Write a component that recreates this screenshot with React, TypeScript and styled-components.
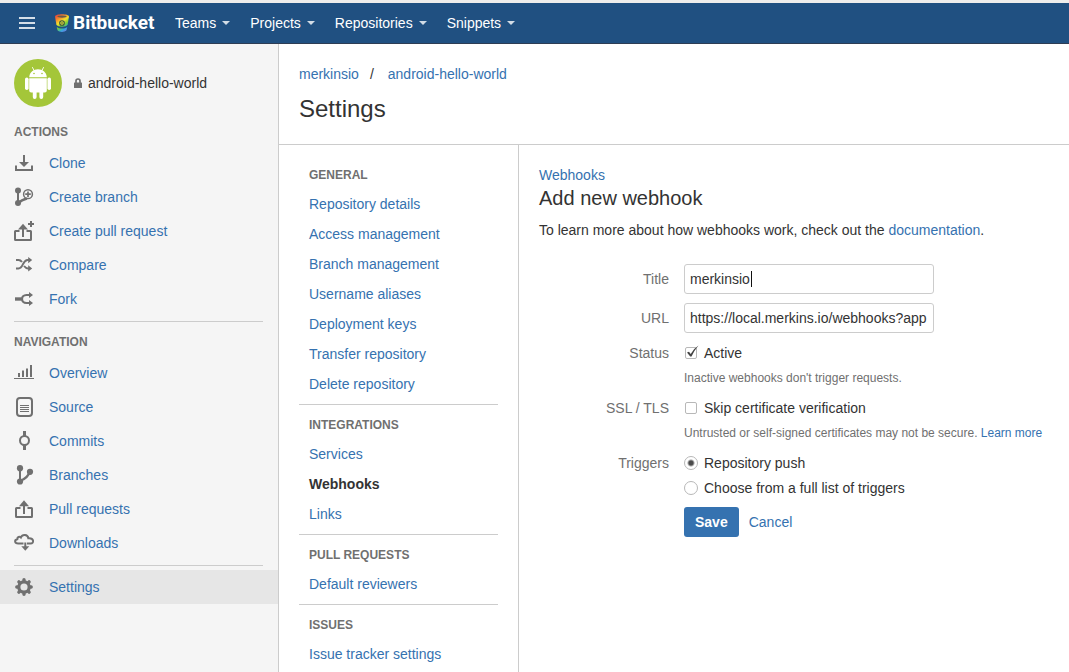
import React, { useState } from "react";
import styled, { createGlobalStyle } from "styled-components";

const GlobalStyle = createGlobalStyle`
  *, *::before, *::after { box-sizing: border-box; }
  html, body { margin: 0; padding: 0; }
  body {
    background: #fff;
    color: #333;
    font: 14px/20px "Liberation Sans", Arial, sans-serif;
  }
  h1, h2, h3, p, ul, ol { margin: 0; padding: 0; font-weight: normal; }
  ul, ol { list-style: none; }
  button, input { font: inherit; color: inherit; }
  a { color: #3572b0; text-decoration: none; }
  a:hover { text-decoration: underline; }
  svg { display: block; flex: none; }
`;

const Page = styled.div`
  display: flex;
  flex-direction: column;
  min-height: 100vh;
`;

const TopBar = styled.header`
  display: flex;
  align-items: center;
  height: 44px;
  padding: 0 18px;
  background: #205081;
  border-top: 3px solid #eeedec;
  border-bottom: 1px solid #2e3d54;
`;

const MenuButton = styled.button`
  display: flex;
  padding: 0;
  border: 0;
  background: none;
  cursor: pointer;
`;

const Logo = styled.a`
  display: flex;
  align-items: center;
  gap: 4px;
  flex: 0 0 101px;
  margin: 0 9px 0 19px;
  color: #fff;
  font: bold 19px/24px Roboto, "Liberation Sans", sans-serif;
`;

const MainMenu = styled.nav`
  display: flex;
`;

const MenuItem = styled.button`
  display: flex;
  align-items: center;
  gap: 6px;
  padding: 0 10px;
  border: 0;
  background: none;
  color: #fff;
  cursor: pointer;

  &::after {
    content: "";
    border: 4px solid transparent;
    border-top-color: #d2dce6;
    border-bottom: 0;
  }
`;

const Body = styled.div`
  display: flex;
  flex: 1;
`;

const Sidebar = styled.aside`
  flex: 0 0 279px;
  padding-top: 15px;
  background: #f5f5f5;
  border-right: 1px solid #ccc;
`;

const Repository = styled.div`
  display: flex;
  align-items: center;
  padding: 0 14px;
  margin-bottom: 15px;

  span { margin-left: 6px; }
`;

const LockWrap = styled.i`
  margin-left: 12px;
`;

const GroupTitle = styled.h3`
  margin-bottom: 4px;
  color: #707070;
  font-size: 12px;
  font-weight: bold;
  line-height: 20px;
  text-transform: uppercase;
`;

const SideTitle = styled(GroupTitle)`
  padding: 0 14px;
`;

const SideDivider = styled.hr<{ $after: number }>`
  height: 1px;
  margin: 5px 15px ${(p) => p.$after}px 14px;
  border: 0;
  background: #ccc;
`;

const SideLink = styled.a<{ $active?: boolean }>`
  display: flex;
  align-items: center;
  gap: 15px;
  height: 34px;
  padding: 0 14px;
  background: ${(p) => (p.$active ? "#e6e6e6" : "transparent")};
`;

const Main = styled.main`
  display: flex;
  flex: 1;
  flex-direction: column;
  min-width: 0;
`;

const PageHeader = styled.header`
  padding: 20px 20px 20px;
  border-bottom: 1px solid #ccc;
`;

const Breadcrumbs = styled.ol`
  display: flex;
  margin-bottom: 10px;

  li + li::before {
    content: "/";
    margin: 0 14px 0 11px;
  }
`;

const PageTitle = styled.h1`
  font-size: 24px;
  line-height: 30px;
`;

const Columns = styled.div`
  display: flex;
  flex: 1;
`;

const SettingsNav = styled.nav`
  flex: 0 0 240px;
  padding: 20px 20px 0;
  border-right: 1px solid #ccc;
`;

const NavGroup = styled.section`
  padding: 0 10px;

  & + & {
    margin-top: 5px;
    padding-top: 10px;
    border-top: 1px solid #ccc;
  }
`;

const NavLink = styled.a<{ $active?: boolean }>`
  display: block;
  line-height: 30px;
  color: ${(p) => (p.$active ? "#333" : "#3572b0")};
  font-weight: ${(p) => (p.$active ? "bold" : "normal")};
`;

const Content = styled.section`
  flex: 1;
  min-width: 0;
  padding: 20px;
`;

const ContentTitle = styled.h2`
  font-size: 20px;
  line-height: 26px;
  margin-bottom: 9px;
`;

const Form = styled.form`
  margin-top: 24px;
`;

const Field = styled.div<{ $gap?: number }>`
  display: grid;
  grid-template-columns: 130px minmax(0, 1fr);
  column-gap: 15px;
  margin-top: ${(p) => p.$gap ?? 0}px;
`;

const FieldLabel = styled.label<{ $tall?: boolean }>`
  color: #707070;
  text-align: right;
  line-height: ${(p) => (p.$tall ? 30 : 20)}px;
`;

const InputWrap = styled.div`
  position: relative;
  max-width: 250px;
`;

const TextInput = styled.input`
  display: block;
  width: 100%;
  height: 30px;
  padding: 0 5px;
  border: 1px solid #ccc;
  border-radius: 3px;
  background: #fff;
  color: #333;
  outline: 0;
  caret-color: transparent;
`;

const TextCursor = styled.span`
  position: absolute;
  top: 7px;
  left: 67px;
  width: 1px;
  height: 16px;
  background: #111;
`;

const Choice = styled.label`
  display: flex;
  align-items: center;
  width: fit-content;

  & + & { margin-top: 5px; }
`;

const CheckSlot = styled.span`
  position: relative;
  display: flex;
  margin: 0 7px 0 1px;

  svg {
    position: absolute;
    left: 1px;
    top: -2px;
    pointer-events: none;
  }
`;

const CheckBox = styled.input`
  appearance: none;
  width: 12px;
  height: 12px;
  margin: 0;
  border: 1px solid #b8b8b8;
  border-radius: 2px;
  background: #fff;
`;

const Radio = styled.input`
  appearance: none;
  width: 14px;
  height: 14px;
  margin: 0 6px 0 0;
  border: 1px solid #b8b8b8;
  border-radius: 50%;
  background: #fff;

  &:checked {
    background: radial-gradient(circle, #4a4a4a 0 2px, #fff 4px);
  }
`;

const Hint = styled.p`
  margin-top: 5px;
  color: #707070;
  font-size: 12px;
  line-height: 20px;
`;

const Actions = styled.div`
  display: flex;
  align-items: center;
  gap: 10px;
  grid-column: 2;
`;

const SaveButton = styled.button`
  height: 30px;
  padding: 0 11px;
  border: 0;
  border-radius: 3px;
  background: #3572b0;
  color: #fff;
  font-weight: bold;
  cursor: pointer;
`;

const Icon = ({ children }: { children: React.ReactNode }) => (
  <svg width="20" height="20" viewBox="0 0 20 20" fill="none" stroke="#707070" strokeWidth="2" aria-hidden="true">
    {children}
  </svg>
);

const solid = { fill: "#707070", stroke: "none" };

const icons = {
  clone: (
    <Icon>
      <path d="M2 12.5V17H18V12.5M10 2V10" />
      <path {...solid} d="M5 9H15L10 14Z" />
    </Icon>
  ),
  createBranch: (
    <Icon>
      <path d="M4 4V16" />
      <path strokeWidth="2.6" d="M4 16L8 13.4Q11 12 13 11.5" />
      <circle {...solid} cx="4" cy="3.5" r="3" />
      <circle {...solid} cx="4" cy="16" r="3" />
      <circle cx="14" cy="7.2" r="4.4" strokeWidth="1.5" />
      <path strokeWidth="1.7" d="M14 4.4V10M11.2 7.2H16.8" />
    </Icon>
  ),
  createPull: (
    <Icon>
      <path d="M5.5 10H1.5Q1 10 1 10.5V18.5Q1 19 1.5 19H16.5Q17 19 17 18.5V10.5Q17 10 16.5 10H12.5M9 16V7" />
      <path {...solid} d="M4 8.5L9 2.8L14 8.5Z" />
      <path d="M17 0V6M14 3H20" />
    </Icon>
  ),
  compare: (
    <Icon>
      <path d="M2 5H4.5Q6.5 5 8 7M10 11Q12 13.5 14 13.5H15.5M2 13.5H4.5Q7 13.5 9 9.2Q11 5 13.5 5H15.5" />
      <path {...solid} d="M14.2 2L18.2 5L14.2 8.2ZM14.2 10.3L18.2 13.5L14.2 16.6Z" />
    </Icon>
  ),
  fork: (
    <Icon>
      <path strokeWidth="3.4" d="M1 10H7.5" />
      <path strokeWidth="2.2" d="M17 6H12.5C6.5 6 6.5 14 12.5 14H17" />
      <path {...solid} d="M15 3L19 6L15 9ZM15 11L19 14L15 17Z" />
    </Icon>
  ),
  overview: (
    <Icon>
      <path d="M5 10V14M9 7.5V14M13 5.5V14M17 2V14" />
      <path strokeWidth="1" d="M0 15.5H20" />
    </Icon>
  ),
  source: (
    <Icon>
      <rect x="3" y="1" width="15" height="18" rx="3" />
      <path strokeWidth="1" d="M6 8.5H15M6 10.5H15M6 12.5H15M6 14.5H15" />
    </Icon>
  ),
  commits: (
    <Icon>
      <circle cx="10.5" cy="9.5" r="4.5" />
      <path strokeWidth="3" d="M10.5 0V5M10.5 14V19" />
    </Icon>
  ),
  branches: (
    <Icon>
      <path d="M6 3V16" />
      <path strokeWidth="2.4" d="M6 16Q14 13 15.5 7" />
      <circle {...solid} cx="6" cy="3.2" r="3.1" />
      <circle {...solid} cx="6" cy="16.5" r="3.1" />
      <circle {...solid} cx="16" cy="6.8" r="3.1" />
    </Icon>
  ),
  pulls: (
    <Icon>
      <path d="M6.5 9H2.5Q2 9 2 9.5V17.5Q2 18 2.5 18H17.5Q18 18 18 17.5V9.5Q18 9 17.5 9H13.5M10 15V6" />
      <path {...solid} d="M5 7.2L10 1.2L15 7.2Z" />
    </Icon>
  ),
  downloads: (
    <Icon>
      <path d="M9.5 10.5H4.2C.4 10.5 .2 6.8 3.3 6.2C3.2 4 5.6 3.2 6.9 4.5C8.3 1 13.8 1.2 14.3 5.2C20 4.6 20.5 10.500 16.5 10.5H13M11.3 9.5V14" />
      <path {...solid} d="M7.3 13.2H15.3L11.3 17.8Z" />
    </Icon>
  ),
  settings: (
    <Icon>
      <circle cx="10" cy="10" r="5.2" strokeWidth="3.2" />
      <path
        strokeWidth="3.4"
        strokeLinecap="round"
        d="M10 2.8V4M10 16V17.2M2.8 10H4M16 10H17.2M4.9 4.9L5.7 5.7M14.3 14.3L15.1 15.1M4.9 15.1L5.7 14.3M14.3 5.7L15.1 4.9"
      />
    </Icon>
  ),
};

const Hamburger = () => (
  <svg width="18" height="14" viewBox="0 0 18 14" stroke="#d5dee8" strokeWidth="2" aria-hidden="true">
    <path d="M1 2H17M1 7H17M1 12H17" />
  </svg>
);

const BucketMark = () => (
  <svg width="14" height="18" viewBox="0 0 14 18" aria-hidden="true">
    <defs>
      <linearGradient id="rainbow" gradientUnits="userSpaceOnUse" x1="1" y1="1" x2="12" y2="18">
        <stop offset="0" stopColor="#e8413c" />
        <stop offset="0.22" stopColor="#f58a2c" />
        <stop offset="0.42" stopColor="#f5e02c" />
        <stop offset="0.62" stopColor="#6fcf3c" />
        <stop offset="0.8" stopColor="#35a6e0" />
        <stop offset="1" stopColor="#8a6ce0" />
      </linearGradient>
    </defs>
    <path
      fill="url(#rainbow)"
      d="M0 2.500C0 -.6 14 -.6 14 2.500L12.600 10.800C11.500 13.400 2.500 13.400 1.400 10.800Z"
    />
    <path fill="url(#rainbow)" d="M1.8 13C4.5 15 9.5 15 12.2 13L11.5 16.3C9.5 18.5 4.5 18.5 2.5 16.3Z" />
    <ellipse cx="7" cy="2.6" rx="4.6" ry="1.1" fill="#6a5a4a" />
    <circle cx="7" cy="9" r="2.3" fill="#f3e43a" stroke="#31523f" strokeWidth="1.1" />
    <circle cx="7" cy="9" r=".8" fill="#31523f" />
  </svg>
);

const Avatar = () => (
  <svg width="48" height="48" viewBox="0 0 48 48" role="img" aria-label="Android">
    <circle cx="24" cy="24" r="24" fill="#a4c639" />
    <g fill="#fff">
      <path d="M15.2 18.3C15.7 7.500 32.3 7.500 32.8 18.3Z" />
      <path d="M15.2 19.2H32.8V31.5Q32.8 33.5 30.8 33.5H29.2V38A1.900 1.900 0 0 1 25.400 38V33.5H22.6V38A1.900 1.900 0 0 1 18.8 38V33.5H17.2Q15.2 33.5 15.2 31.5Z" />
      <rect x="11" y="18.5" width="3.6" height="12.5" rx="1.8" />
      <rect x="33.4" y="18.5" width="3.6" height="12.500" rx="1.8" />
    </g>
    <path d="M18.5 8.5L20.3 12M29.5 8.5L27.7 12" stroke="#fff" strokeWidth=".9" strokeLinecap="round" />
    <circle cx="20" cy="14.5" r=".8" fill="#a4c639" />
    <circle cx="28" cy="14.5" r=".8" fill="#a4c639" />
  </svg>
);

const Lock = () => (
  <svg width="8" height="11" viewBox="0 0 8 11" aria-hidden="true">
    <rect x="0" y="4.500" width="8" height="5.500" rx=".5" fill="#707070" />
    <path d="M2 5V3Q2 1 4 1T6 3V5" fill="none" stroke="#707070" strokeWidth="1.700" />
  </svg>
);

const CheckMark = () => (
  <svg width="13" height="13" viewBox="0 0 13 13" aria-hidden="true">
    <path d="M1 7.500L3 6.800L4.700 9Q7.500 3.500 12.500 .5Q8.200 5.500 5.500 11.500H4.200Z" fill="#444" />
  </svg>
);

type SideItem = [string, keyof typeof icons];

const actions: SideItem[] = [
  ["Clone", "clone"],
  ["Create branch", "createBranch"],
  ["Create pull request", "createPull"],
  ["Compare", "compare"],
  ["Fork", "fork"],
];

const navigation: SideItem[] = [
  ["Overview", "overview"],
  ["Source", "source"],
  ["Commits", "commits"],
  ["Branches", "branches"],
  ["Pull requests", "pulls"],
  ["Downloads", "downloads"],
];

const settingsGroups = [
  {
    title: "General",
    links: [
      "Repository details",
      "Access management",
      "Branch management",
      "Username aliases",
      "Deployment keys",
      "Transfer repository",
      "Delete repository",
    ],
  },
  { title: "Integrations", links: ["Services", "Webhooks", "Links"] },
  { title: "Pull requests", links: ["Default reviewers"] },
  { title: "Issues", links: ["Issue tracker settings"] },
];

const SideList = ({ items }: { items: SideItem[] }) => (
  <ul>
    {items.map(([label, icon]) => (
      <li key={label}>
        <SideLink href="#">
          {icons[icon]}
          {label}
        </SideLink>
      </li>
    ))}
  </ul>
);

export default function App() {
  const [title, setTitle] = useState("merkinsio");
  const [url, setUrl] = useState("https://local.merkins.io/webhooks?app");
  const [active, setActive] = useState(true);
  const [skip, setSkip] = useState(false);

  return (
    <Page>
      <GlobalStyle />
      <TopBar>
        <MenuButton type="button" aria-label="Menu">
          <Hamburger />
        </MenuButton>
        <Logo href="#">
          <BucketMark />
          Bitbucket
        </Logo>
        <MainMenu>
          {["Teams", "Projects", "Repositories", "Snippets"].map((name) => (
            <MenuItem key={name} type="button">
              {name}
            </MenuItem>
          ))}
        </MainMenu>
      </TopBar>
      <Body>
        <Sidebar>
          <Repository>
            <Avatar />
            <LockWrap>
              <Lock />
            </LockWrap>
            <span>android-hello-world</span>
          </Repository>
          <SideTitle>Actions</SideTitle>
          <SideList items={actions} />
          <SideDivider $after={10} />
          <SideTitle>Navigation</SideTitle>
          <SideList items={navigation} />
          <SideDivider $after={4} />
          <SideLink href="#" $active>
            {icons.settings}
            Settings
          </SideLink>
        </Sidebar>
        <Main>
          <PageHeader>
            <Breadcrumbs>
              <li>
                <a href="#">merkinsio</a>
              </li>
              <li>
                <a href="#">android-hello-world</a>
              </li>
            </Breadcrumbs>
            <PageTitle>Settings</PageTitle>
          </PageHeader>
          <Columns>
            <SettingsNav>
              {settingsGroups.map((group) => (
                <NavGroup key={group.title}>
                  <GroupTitle>{group.title}</GroupTitle>
                  {group.links.map((link) => (
                    <NavLink key={link} href="#" $active={link === "Webhooks"}>
                      {link}
                    </NavLink>
                  ))}
                </NavGroup>
              ))}
            </SettingsNav>
            <Content>
              <a href="#">Webhooks</a>
              <ContentTitle>Add new webhook</ContentTitle>
              <p>
                To learn more about how webhooks work, check out the <a href="#">documentation</a>.
              </p>
              <Form onSubmit={(e) => e.preventDefault()}>
                <Field>
                  <FieldLabel $tall htmlFor="title">
                    Title
                  </FieldLabel>
                  <InputWrap>
                    <TextInput id="title" type="text" value={title} onChange={(e) => setTitle(e.target.value)} />
                    <TextCursor />
                  </InputWrap>
                </Field>
                <Field $gap={9}>
                  <FieldLabel $tall htmlFor="url">
                    URL
                  </FieldLabel>
                  <InputWrap>
                    <TextInput id="url" type="text" value={url} onChange={(e) => setUrl(e.target.value)} />
                  </InputWrap>
                </Field>
                <Field $gap={10}>
                  <FieldLabel htmlFor="active">Status</FieldLabel>
                  <div>
                    <Choice>
                      <CheckSlot>
                        <CheckBox
                          id="active"
                          type="checkbox"
                          checked={active}
                          onChange={(e) => setActive(e.target.checked)}
                        />
                        {active && <CheckMark />}
                      </CheckSlot>
                      Active
                    </Choice>
                    <Hint>Inactive webhooks don't trigger requests.</Hint>
                  </div>
                </Field>
                <Field $gap={10}>
                  <FieldLabel htmlFor="skip">SSL / TLS</FieldLabel>
                  <div>
                    <Choice>
                      <CheckSlot>
                        <CheckBox
                          id="skip"
                          type="checkbox"
                          checked={skip}
                          onChange={(e) => setSkip(e.target.checked)}
                        />
                        {skip && <CheckMark />}
                      </CheckSlot>
                      Skip certificate verification
                    </Choice>
                    <Hint>
                      Untrusted or self-signed certificates may not be secure. <a href="#">Learn more</a>
                    </Hint>
                  </div>
                </Field>
                <Field $gap={10}>
                  <FieldLabel as="span" id="triggers">
                    Triggers
                  </FieldLabel>
                  <div role="radiogroup" aria-labelledby="triggers">
                    <Choice>
                      <Radio type="radio" name="trigger" defaultChecked />
                      Repository push
                    </Choice>
                    <Choice>
                      <Radio type="radio" name="trigger" />
                      Choose from a full list of triggers
                    </Choice>
                  </div>
                </Field>
                <Field $gap={9}>
                  <Actions>
                    <SaveButton type="submit">Save</SaveButton>
                    <a href="#">Cancel</a>
                  </Actions>
                </Field>
              </Form>
            </Content>
          </Columns>
        </Main>
      </Body>
    </Page>
  );
}
